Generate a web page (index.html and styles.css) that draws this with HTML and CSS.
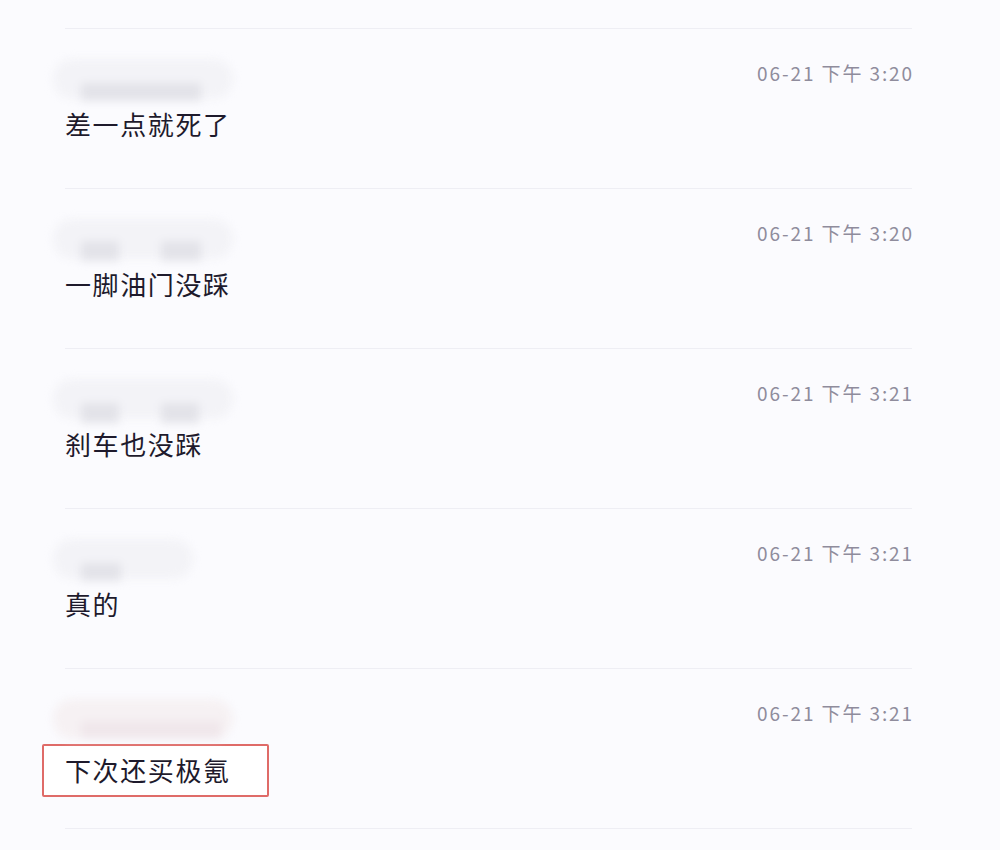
FILE: index.html
```html
<!DOCTYPE html>
<html lang="zh">
<head>
<meta charset="utf-8">
<link rel="stylesheet" href="styles.css">
</head>
<body>
<div class="list">
  <div class="row">
    <div class="head">
      <div class="name n1"><span class="blk b1"></span></div>
      <div class="time">06-21 下午 3:20</div>
    </div>
    <div class="text">差一点就死了</div>
  </div>
  <div class="row">
    <div class="head">
      <div class="name n2"><span class="blk b2a"></span><span class="blk b2b"></span></div>
      <div class="time">06-21 下午 3:20</div>
    </div>
    <div class="text">一脚油门没踩</div>
  </div>
  <div class="row">
    <div class="head">
      <div class="name n3"><span class="blk b3a"></span><span class="blk b3b"></span></div>
      <div class="time">06-21 下午 3:21</div>
    </div>
    <div class="text">刹车也没踩</div>
  </div>
  <div class="row">
    <div class="head">
      <div class="name n4"><span class="blk b4"></span></div>
      <div class="time">06-21 下午 3:21</div>
    </div>
    <div class="text">真的</div>
  </div>
  <div class="row">
    <div class="head">
      <div class="name n5"><span class="blk b5"></span></div>
      <div class="time">06-21 下午 3:21</div>
    </div>
    <div class="text"><span class="mark">下次还买极氪</span></div>
  </div>
  <div class="row last"></div>
</div>
</body>
</html>
```
FILE: styles.css
```css
html, body {
  margin: 0;
  padding: 0;
  background: #fbfbfe;
}
body {
  width: 1000px;
  height: 850px;
  overflow: hidden;
  font-family: "Noto Sans CJK SC", "Noto Sans", sans-serif;
}
.list {
  padding: 28px 88px 0 65px;
}
.row {
  height: 159px;
  border-top: 1px solid #eeeef4;
  display: flex;
  flex-direction: column;
}
.row.last {
  height: 20px;
}
.head {
  display: flex;
  justify-content: space-between;
  align-items: flex-start;
  height: 80px;
}
.time {
  margin-top: 31px;
  font-size: 19px;
  line-height: 26px;
  letter-spacing: 1.9px;
  color: #8f8c9c;
  margin-right: -2px;
}
.name {
  position: relative;
  margin-top: 22px;
  width: 170px;
  height: 50px;
  filter: blur(4px);
}
.name::before {
  content: "";
  position: absolute;
  left: -12px;
  top: 8px;
  width: 180px;
  height: 40px;
  border-radius: 20px;
  background: #f3f3f7;
}
.blk {
  position: absolute;
  background: #e3e3e9;
}
.b1 { left: 16px; top: 32px; width: 120px; height: 18px; }
.b2a { left: 16px; top: 30px; width: 38px; height: 20px; }
.b2b { left: 96px; top: 30px; width: 40px; height: 20px; }
.b3a { left: 16px; top: 32px; width: 38px; height: 20px; }
.b3b { left: 96px; top: 32px; width: 38px; height: 20px; }
.b4 { left: 16px; top: 32px; width: 40px; height: 18px; }
.b5 { left: 16px; top: 30px; width: 140px; height: 18px; background: #f0e7eb; }
.n4::before { width: 140px; }
.n5::before { background: #f6f1f3; }
.text {
  font-size: 26px;
  line-height: 30px;
  letter-spacing: 1.6px;
  color: #1e1a2c;
}
.mark {
  display: inline-block;
  margin-left: -23px;
  margin-top: -5px;
  padding: 9px 36px 10px 21px;
  border: 2px solid #df6b68;
  border-radius: 2px;
  background: #fff;
}
```
